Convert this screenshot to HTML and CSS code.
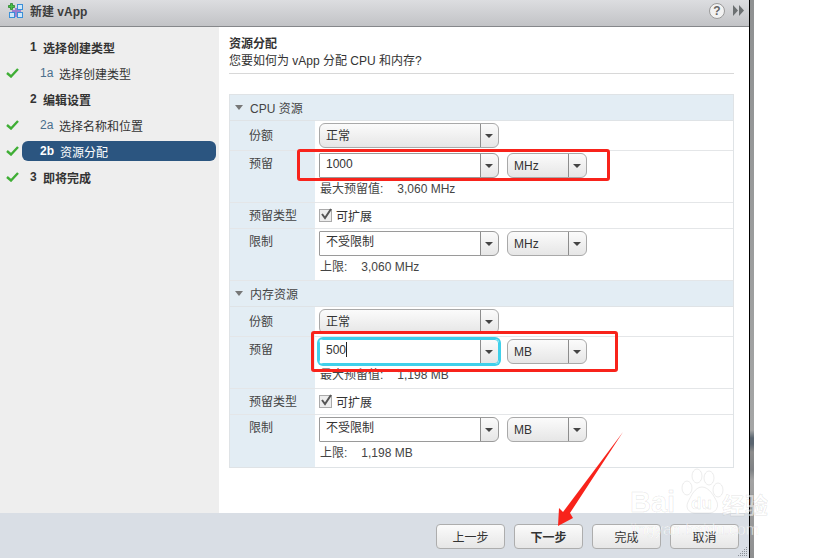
FILE: index.html
```html
<!DOCTYPE html>
<html lang="zh">
<head>
<meta charset="utf-8">
<title>新建 vApp</title>
<link rel="stylesheet" href="styles.css">
</head>
<body>
<div class="page">
  <div class="window">
    <header class="titlebar">
      <svg class="app-icon" width="16" height="16" viewBox="0 0 16 16">
        <rect x="1.500" y="9.500" width="5" height="5" fill="#cfe6f8" stroke="#3b8fd8"/>
        <rect x="9.500" y="1.500" width="5" height="5" fill="#cfe6f8" stroke="#3b8fd8"/>
        <rect x="9.500" y="9.500" width="5" height="5" fill="#cfe6f8" stroke="#3b8fd8"/>
        <path d="M4 8h9M8 5v9" stroke="#9a7fd0" stroke-width="2"/>
        <path d="M2.500.5h2v2h2v2h-2v2h-2v-2h-2v-2h2z" fill="#46c046" stroke="#1d7a1d" stroke-width=".7"/>
      </svg>
      <span class="title">新建 vApp</span>
      <span class="help">?</span>
      <svg class="more" width="11" height="11" viewBox="0 0 11 11"><path d="M0 0l5 5.500-5 5.500zM6 0l5 5.500-5 5.500z" fill="#6c7072"/></svg>
    </header>
    <div class="body">
      <nav class="sidebar">
        <div class="step head"><span class="check"></span><span class="num">1</span><span>选择创建类型</span></div>
        <div class="step sub"><svg class="check" width="13" height="10" viewBox="0 0 13 10"><path d="M1 5l4 3.500L12 1" fill="none" stroke="#3fae35" stroke-width="2.400"/></svg><span class="num">1a</span><span>选择创建类型</span></div>
        <div class="step head"><span class="check"></span><span class="num">2</span><span>编辑设置</span></div>
        <div class="step sub"><svg class="check" width="13" height="10" viewBox="0 0 13 10"><path d="M1 5l4 3.500L12 1" fill="none" stroke="#3fae35" stroke-width="2.400"/></svg><span class="num">2a</span><span>选择名称和位置</span></div>
        <div class="step sub current"><svg class="check" width="13" height="10" viewBox="0 0 13 10"><path d="M1 5l4 3.500L12 1" fill="none" stroke="#3fae35" stroke-width="2.400"/></svg><span class="pill"><b class="num">2b</b><span>资源分配</span></span></div>
        <div class="step head"><svg class="check" width="13" height="10" viewBox="0 0 13 10"><path d="M1 5l4 3.500L12 1" fill="none" stroke="#3fae35" stroke-width="2.400"/></svg><span class="num">3</span><span>即将完成</span></div>
      </nav>
      <main class="content">
        <h1 class="heading">资源分配</h1>
        <p class="question">您要如何为 vApp 分配 CPU 和内存?</p>
        <div class="table">
          <div class="section"><span class="tri"></span>CPU 资源</div>
          <div class="row one"><div class="label">份额</div><div class="cell"><div class="line"><div class="combo"><span class="val">正常</span><span class="arrow"></span></div></div></div></div>
          <div class="row two"><div class="label">预留</div><div class="cell"><div class="line"><div class="combo input"><span class="val">1000</span><span class="arrow"></span></div><div class="combo unit"><span class="val">MHz</span><span class="arrow"></span></div></div><div class="note"><span>最大预留值:</span><span>3,060 MHz</span></div></div></div>
          <div class="row one"><div class="label mid">预留类型</div><div class="cell mid"><label class="checkline"><span class="box"><svg width="14" height="14" viewBox="0 0 14 14"><path d="M3 6l3 4 6-9" fill="none" stroke="#555" stroke-width="2"/></svg></span>可扩展</label></div></div>
          <div class="row two"><div class="label">限制</div><div class="cell"><div class="line"><div class="combo input"><span class="val">不受限制</span><span class="arrow"></span></div><div class="combo unit"><span class="val">MHz</span><span class="arrow"></span></div></div><div class="note short"><span>上限:</span><span>3,060 MHz</span></div></div></div>
          <div class="section"><span class="tri"></span>内存资源</div>
          <div class="row one"><div class="label">份额</div><div class="cell"><div class="line"><div class="combo"><span class="val">正常</span><span class="arrow"></span></div></div></div></div>
          <div class="row two"><div class="label">预留</div><div class="cell"><div class="line"><div class="combo input focus"><span class="val">500<i class="caret"></i></span><span class="arrow"></span></div><div class="combo unit"><span class="val">MB</span><span class="arrow"></span></div></div><div class="note"><span>最大预留值:</span><span>1,198 MB</span></div></div></div>
          <div class="row one"><div class="label mid">预留类型</div><div class="cell mid"><label class="checkline"><span class="box"><svg width="14" height="14" viewBox="0 0 14 14"><path d="M3 6l3 4 6-9" fill="none" stroke="#555" stroke-width="2"/></svg></span>可扩展</label></div></div>
          <div class="row two last"><div class="label">限制</div><div class="cell"><div class="line"><div class="combo input"><span class="val">不受限制</span><span class="arrow"></span></div><div class="combo unit"><span class="val">MB</span><span class="arrow"></span></div></div><div class="note short"><span>上限:</span><span>1,198 MB</span></div></div></div>
        </div>
      </main>
    </div>
    <footer class="footer">
      <button class="btn">上一步</button>
      <button class="btn strong">下一步</button>
      <button class="btn">完成</button>
      <button class="btn">取消</button>
      <svg class="grip" width="10" height="10" viewBox="0 0 10 10"><path d="M8 0h1v1H8zM6 2h1v1H6zM8 2h1v1H8zM4 4h1v1H4zM6 4h1v1H6zM8 4h1v1H8zM2 6h1v1H2zM4 6h1v1H4zM6 6h1v1H6zM8 6h1v1H8zM0 8h1v1H0zM2 8h1v1H2zM4 8h1v1H4zM6 8h1v1H6zM8 8h1v1H8z" fill="#8a8f96"/></svg>
    </footer>
  </div>
  <div class="edge"></div>
  <div class="mark red-a"></div>
  <div class="mark red-b"></div>
  <svg class="pointer" width="72" height="100" viewBox="0 0 72 100"><path d="M70 2L17 83l3 5L5 96l1-18 4 4z" fill="#f8231b"/></svg>
  <div class="watermark">
    <span class="wm-big">Bai</span>
    <svg class="paw" width="44" height="48" viewBox="0 0 44 48"><g fill="rgba(255,255,255,.5)" stroke="rgba(0,0,0,.08)"><ellipse cx="7" cy="20" rx="5" ry="7"/><ellipse cx="17" cy="8" rx="5" ry="7"/><ellipse cx="29" cy="10" rx="5" ry="7"/><ellipse cx="38" cy="22" rx="5" ry="7"/><path d="M22 19c7 0 12 9 15 15 2 6-2 11-8 11H15C9 45 5 40 8 34c3-6 7-15 14-15z"/></g></svg>
    <span class="wm-du">du</span>
    <span class="wm-cn">经验</span>
    <span class="wm-small">jingyan.baidu.com</span>
  </div>
</div>
</body>
</html>
```
FILE: styles.css
```css
* { box-sizing: border-box; }
html, body { margin: 0; padding: 0; }
body {
  width: 819px;
  height: 558px;
  overflow: hidden;
  background: #fff;
  font-family: "Liberation Sans", "Noto Sans CJK SC", sans-serif;
  font-size: 12px;
  color: #333;
}
.page { position: relative; width: 819px; height: 558px; display: flex; }
.window { width: 749px; height: 558px; display: flex; flex-direction: column; background: #fff; }
.edge {
  width: 5px;
  height: 558px;
  border-left: 1px solid #000;
  background: linear-gradient(#8f9192 0, #a5a6a6 430px, #5a6570 438px, #5a6570 444px, #8c8c8c 452px, #7f8285 470px, #a3a3a3 480px, #8e8f90 558px);
}
.titlebar {
  height: 27px;
  flex: none;
  display: flex;
  align-items: center;
  background: linear-gradient(#dcdde0, #c2c3c6);
  border-bottom: 1px solid #85878a;
  padding: 0 5px 5px 8px;
}
.app-icon { margin-right: 6px; }
.title { font-size: 12px; font-weight: bold; color: #3c3c3c; flex: 1; }
.help {
  width: 16px; height: 16px; border-radius: 50%;
  background: #f2f2f2; border: 1px solid #9a9a9a;
  text-align: center; line-height: 14px; font-weight: bold; color: #666; margin-right: 8px;
}
.body { flex: 1; display: flex; min-height: 0; }
.sidebar { width: 219px; flex: none; background: #eee; padding-top: 7px; }
.step { height: 26px; display: flex; align-items: center; font-size: 12px; color: #333; }
.step .check { width: 13px; flex: none; margin: 0 0 0 6px; }
.step .num { flex: none; }
.head { font-weight: bold; }
.head .num { margin-left: 11px; width: 13px; }
.sub .num { margin-left: 21px; width: 19px; color: #4a6f8c; }
.current .pill {
  margin-left: 3px;
  width: 194px; height: 20px;
  background: #2b5580;
  border-radius: 6px;
  color: #fff;
  display: flex; align-items: center;
  padding-left: 18px;
}
.current .pill .num { margin: 0; color: #fff; width: 20px; }
.content { flex: 1; padding: 10px 15px 0 10px; min-width: 0; }
.heading { font-size: 12px; font-weight: bold; margin: 0; line-height: 15px; color: #333; }
.question {
  margin: 0; padding: 2px 0 4px; line-height: 15px;
  border-bottom: 1px solid #d8d8d8;
}
.table { margin-top: 20px; border: 1px solid #dfe3e6; }
.section {
  height: 26px; background: #e3edf4; display: flex; align-items: center;
  padding: 0 0 1px 5px; border-bottom: 1px solid #dfe3e6; color: #444;
}
.tri {
  width: 0; height: 0; margin-right: 7px;
  border-left: 4px solid transparent; border-right: 4px solid transparent; border-top: 5px solid #777;
}
.row { display: flex; border-bottom: 1px solid #e4e6e8; }
.row.last { border-bottom: 0; }
.row.one { height: 26px; }
.row.two { height: 52px; }
.row.one:has(.line) { height: 30px; }
.row.one:has(.line) .label { padding-top: 7px; }
.label {
  width: 85px; flex: none; background: #e3edf4; padding: 5px 0 0 19px; color: #444; line-height: 16px;
}
.cell { flex: 1; padding: 2px 0 0 4px; }
.cell.mid { padding-top: 4px; }
.line { display: flex; gap: 8px; }
.combo {
  width: 180px; height: 25px; display: flex; align-items: stretch;
  border: 1px solid #a9a9a9; border-radius: 6px;
  background: linear-gradient(#fbfbfb, #e6e6e6);
}
.combo .val { flex: 1; padding-left: 6px; line-height: 24px; color: #333; }
.combo .arrow { width: 18px; flex: none; border-left: 1px solid #8d8d8d; position: relative; }
.combo .arrow::after {
  content: ""; position: absolute; left: 4px; top: 10px; width: 0; height: 0;
  border-left: 4px solid transparent; border-right: 4px solid transparent; border-top: 4px solid #444;
}
.combo.input { border-color: #9a9a9a; border-radius: 1px 6px 6px 1px; }
.combo.input .val { background: #fff; line-height: 20px; }
.combo.focus { box-shadow: 0 0 0 2px #3fd0ea; border-color: #3fd0ea; border-radius: 4px; }
.caret { display: inline-block; width: 1px; height: 15px; background: #222; vertical-align: -3px; }
.combo.unit { width: 80px; }
.note { display: flex; gap: 14px; margin-top: 4px; padding-left: 1px; line-height: 15px; color: #444; }
.checkline { display: flex; align-items: center; gap: 4px; }
.box {
  width: 13px; height: 13px; border: 1px solid #aaa; background: #ededed; display: block; position: relative;
}
.box svg { position: absolute; left: -1px; top: -2px; }
.footer {
  height: 45px; flex: none; background: #d9dee5;
  display: flex; justify-content: flex-end; align-items: flex-start; gap: 9px;
  padding: 11px 10px 0 0;
  position: relative;
}
.btn {
  width: 69px; height: 25px; padding: 0;
  border: 1px solid #adadad; border-radius: 4px;
  background: linear-gradient(#fbfbfb, #e6e6e6);
  font: inherit; color: #333;
}
.btn.strong { font-weight: bold; }
.grip { position: absolute; right: 1px; bottom: 1px; }
.mark { position: absolute; border: 3px solid #f8231b; border-radius: 3px; }
.red-a { left: 297px; top: 149px; width: 313px; height: 32px; }
.red-b { left: 311px; top: 331px; width: 307px; height: 41px; }
.pointer { position: absolute; left: 553px; top: 430px; }
.watermark {
  position: absolute; left: 630px; top: 468px; width: 180px; height: 80px;
  color: rgba(255,255,255,.55); -webkit-text-stroke: 1px rgba(0,0,0,.08); pointer-events: none;
}
.wm-big { position: absolute; left: 0; top: 18px; font-size: 29px; line-height: 32px; font-weight: bold; }
.paw { position: absolute; left: 50px; top: 0; }
.wm-du { position: absolute; left: 61px; top: 26px; font-size: 17px; line-height: 20px; font-weight: bold; }
.wm-cn { position: absolute; left: 92px; top: 24px; font-size: 23px; line-height: 28px; font-weight: bold; }
.wm-small { position: absolute; left: 0; top: 53px; font-size: 16px; line-height: 18px; -webkit-text-stroke-width: .5px; }
```
